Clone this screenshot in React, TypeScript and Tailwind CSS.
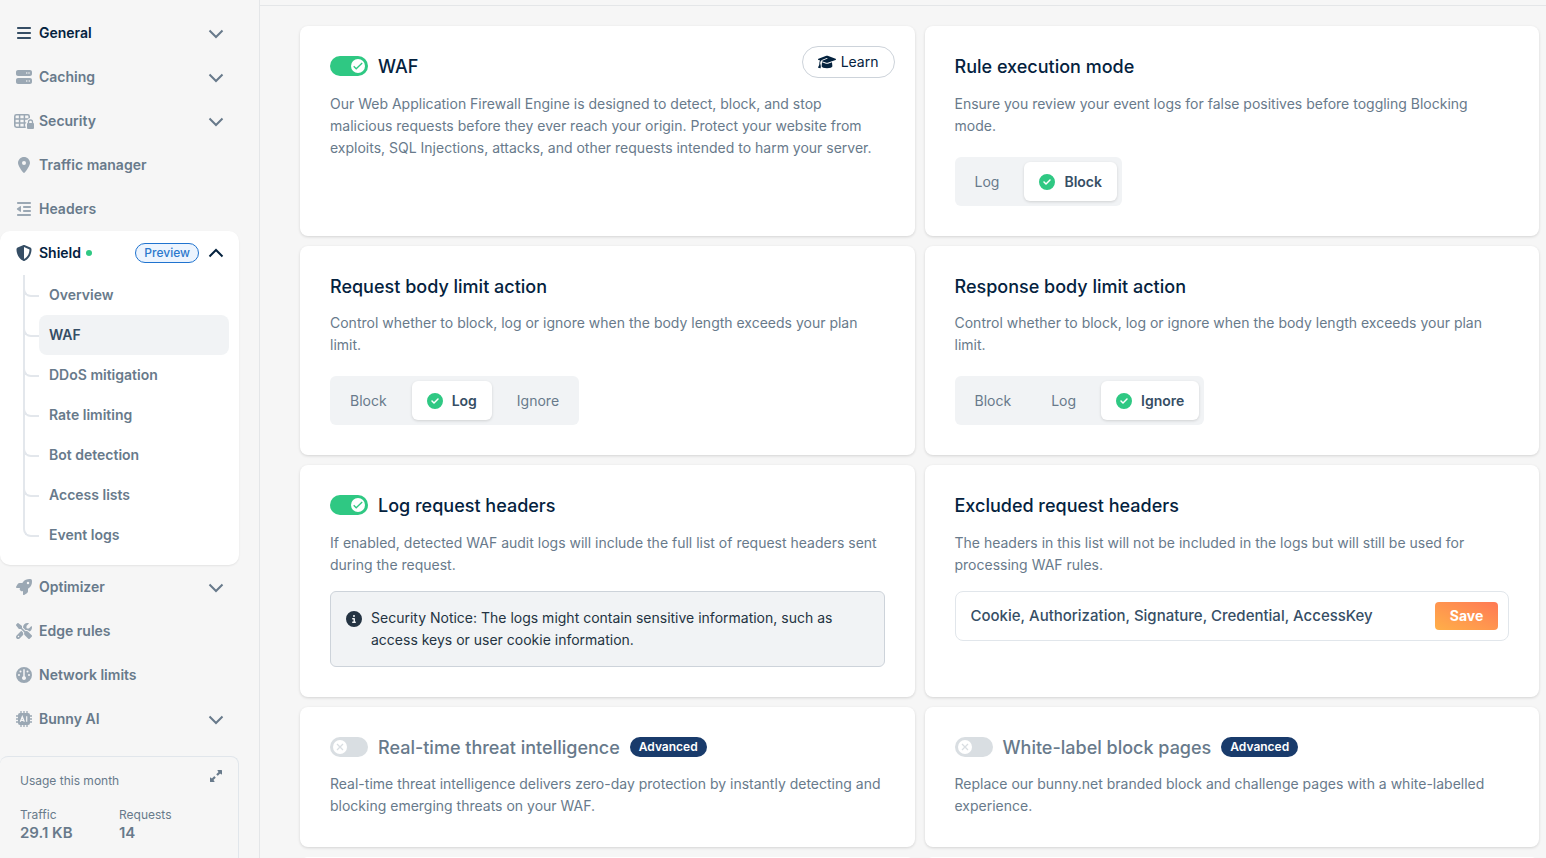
import { useId, useState } from 'react';
import type { ReactNode } from 'react';
import {
  FaBars,
  FaCircleCheck,
  FaCircleInfo,
  FaGauge,
  FaGraduationCap,
  FaLocationDot,
  FaOutdent,
  FaRocket,
  FaScrewdriverWrench,
  FaServer,
  FaShieldHalved,
  FaUpRightAndDownLeftFromCenter,
} from 'react-icons/fa6';

const SHIELD_PAGES = [
  'Overview',
  'WAF',
  'DDoS mitigation',
  'Rate limiting',
  'Bot detection',
  'Access lists',
  'Event logs',
];

function TableLockIcon() {
  return (
    <svg viewBox="0 0 20 16" className="h-4 w-5 shrink-0" fill="none" stroke="currentColor" aria-hidden="true">
      <rect x="0.8" y="1.8" width="14.4" height="12.4" rx="1.6" strokeWidth="1.6" />
      <path d="M5.6 1.500v13M10.400 1.500v13M1 5.900h14.400M1 10h14.400" strokeWidth="1.500" />
      <path
        d="M11.700 16v-6.200l1.100-.900c0-2.300 1.500-4 3.700-4s3.500 1.500 3.500 3.500V16Z"
        fill="#f6f6f6"
        stroke="none"
      />
      <path d="M14.500 11V9a2 2 0 0 1 4 0v2" strokeWidth="1.300" />
      <rect x="13" y="10" width="7" height="6" rx="1" fill="currentColor" stroke="none" />
    </svg>
  );
}

function ChipIcon() {
  return (
    <svg viewBox="0 0 16 16" className="size-4 shrink-0" aria-hidden="true">
      <path
        d="M5 0v16M8 0v16M11 0v16M0 5h16M0 8h16M0 11h16"
        stroke="currentColor"
        strokeWidth="1.3"
      />
      <rect x="2" y="2" width="12" height="12" rx="2" fill="currentColor" />
      <path
        d="m4.3 10.800 2-5.200 2 5.200M5 9.400h2.600M10.700 5.200v5.600"
        stroke="#f6f6f6"
        strokeWidth="1.2"
        fill="none"
      />
    </svg>
  );
}

function Chevron({ up = false }: { up?: boolean }) {
  return (
    <svg
      viewBox="0 0 16 10"
      className={up ? 'h-2.5 w-4 rotate-180' : 'h-2.5 w-4'}
      fill="none"
      stroke="currentColor"
      strokeWidth="2"
      aria-hidden="true"
    >
      <path d="M1.500 1.500 8 8l6.500-6.500" />
    </svg>
  );
}

type NavItemProps = { icon: ReactNode; label: string; expandable?: boolean; current?: boolean };

function NavItem({ icon, label, expandable, current }: NavItemProps) {
  const body = (
    <>
      <span
        className={
          current
            ? 'flex w-5 justify-center text-base text-[#364e65]'
            : 'flex w-5 justify-center text-base text-[#9ba8b4]'
        }
      >
        {icon}
      </span>
      <span className={current ? 'ml-[5px] text-[#04223e]' : 'ml-[5px]'}>{label}</span>
      {expandable && (
        <span className="mt-0.5 ml-auto">
          <Chevron />
        </span>
      )}
    </>
  );

  return (
    <li>
      {expandable ? (
        <button type="button" aria-expanded="false" className="flex h-11 w-full items-center pr-[15px] pl-3.5 text-left">
          {body}
        </button>
      ) : (
        <a href="#" className="flex h-11 items-center pr-[15px] pl-3.5">
          {body}
        </a>
      )}
    </li>
  );
}

function ShieldMenu() {
  return (
    <li className="rounded-[10px] bg-white pb-2.5 shadow-[0_1px_2px_rgba(0,0,0,0.08)]">
      <button type="button" aria-expanded="true" className="flex h-11 w-full items-center pr-[15px] pl-3.5 text-left text-[#04223e]">
        <span className="flex w-5 justify-center text-base text-[#364e65]">
          <FaShieldHalved />
        </span>
        <span className="ml-[5px]">Shield</span>
        <span className="ml-[5px] size-1.5 rounded-full bg-[#2fc883]" />
        <span className="ml-auto flex h-5 items-center rounded-full border border-[#1f73cf] bg-[#ecf4fe] px-2 text-xs font-medium text-[#2b78cc]">
          Preview
        </span>
        <span className="ml-[9px]">
          <Chevron up />
        </span>
      </button>
      <ul className="pr-2.5 pl-[23px]">
        {SHIELD_PAGES.map((page, i) => (
          <li key={page} className="flex h-10">
            <span
              className={
                i === SHIELD_PAGES.length - 1
                  ? 'w-4 border-l-2 border-transparent'
                  : 'w-4 border-l-2 border-[#e3e7ec]'
              }
            >
              <span className="-ml-0.5 block h-[22px] rounded-bl-lg border-b-2 border-l-2 border-[#e3e7ec]" />
            </span>
            <a
              href="#"
              className={
                page === 'WAF'
                  ? 'flex flex-1 items-center rounded-lg bg-[#f1f3f5] px-2.5 text-[#364e65]'
                  : 'flex flex-1 items-center px-2.5'
              }
            >
              {page}
            </a>
          </li>
        ))}
      </ul>
    </li>
  );
}

function Sidebar() {
  return (
    <aside className="flex w-[260px] shrink-0 flex-col border-r border-[#e4e6e8] pt-[11px] pr-5 text-[#687a8b]">
      <nav>
        <ul className="text-sm font-semibold">
          <NavItem icon={<FaBars />} label="General" expandable current />
          <NavItem icon={<FaServer />} label="Caching" expandable />
          <NavItem icon={<TableLockIcon />} label="Security" expandable />
          <NavItem icon={<FaLocationDot />} label="Traffic manager" />
          <NavItem icon={<FaOutdent />} label="Headers" />
          <ShieldMenu />
          <NavItem icon={<FaRocket />} label="Optimizer" expandable />
          <NavItem icon={<FaScrewdriverWrench />} label="Edge rules" />
          <NavItem icon={<FaGauge />} label="Network limits" />
          <NavItem icon={<ChipIcon />} label="Bunny AI" expandable />
        </ul>
      </nav>

      <section className="mt-[15px] flex-1 rounded-t-lg border-t border-r border-[#e1e6eb] px-5 pt-[13px] text-xs">
        <div className="flex items-start justify-between leading-[22px]">
          <h2>Usage this month</h2>
          <button type="button" aria-label="Expand usage" className="-mr-1">
            <FaUpRightAndDownLeftFromCenter />
          </button>
        </div>
        <dl className="mt-3.5 grid grid-cols-2 leading-[18px]">
          <div>
            <dt>Traffic</dt>
            <dd className="text-[15px] leading-[18px] font-semibold">29.1 KB</dd>
          </div>
          <div>
            <dt>Requests</dt>
            <dd className="text-[15px] leading-[18px] font-semibold">14</dd>
          </div>
        </dl>
      </section>
    </aside>
  );
}

function Toggle({ id, defaultChecked = false }: { id: string; defaultChecked?: boolean }) {
  const [on, setOn] = useState(defaultChecked);

  return (
    <span className="relative flex h-5 w-[38px] shrink-0">
      <input
        id={id}
        type="checkbox"
        role="switch"
        checked={on}
        onChange={(e) => setOn(e.target.checked)}
        className="h-5 w-[38px] appearance-none rounded-full bg-[#d9dee2] checked:bg-[#2fc883]"
      />
      <svg
        viewBox="0 0 14 14"
        className={
          on
            ? 'pointer-events-none absolute top-[3px] right-[3px] size-3.5 text-[#2fc883]'
            : 'pointer-events-none absolute top-[3px] left-[3px] size-3.5 text-[#d9dee2]'
        }
        fill="none"
        stroke="currentColor"
        strokeWidth="1.3"
        aria-hidden="true"
      >
        <circle cx="7" cy="7" r="7" fill="#fff" stroke="none" />
        {on ? <path d="m2.700 7.300 2.500 2.500 6-5.800" /> : <path d="m4 4 6 6M10 4l-6 6" />}
      </svg>
    </span>
  );
}

type CardProps = {
  title: string;
  text: string;
  toggle?: 'on' | 'off';
  tight?: boolean;
  badge?: string;
  action?: ReactNode;
  children?: ReactNode;
};

function Card({ title, text, toggle, tight, badge, action, children }: CardProps) {
  const id = useId();

  return (
    <section className="rounded-lg bg-white p-[30px] shadow-[0_1px_3px_rgba(0,0,0,0.14)]">
      <div className={tight ? 'mb-3.5 flex h-[22px] items-start' : 'mb-[15px] flex h-[22px] items-start'}>
        {toggle && <Toggle id={id} defaultChecked={toggle === 'on'} />}
        <h2
          className={
            toggle === 'off'
              ? 'ml-2.5 text-lg leading-[22px] font-medium text-[#687a8b]'
              : toggle
                ? 'ml-2.5 text-lg leading-[22px] font-medium text-[#04223e]'
                : 'text-lg leading-[22px] font-medium text-[#04223e]'
          }
        >
          {toggle ? <label htmlFor={id}>{title}</label> : title}
        </h2>
        {badge && (
          <span className="ml-2.5 flex h-5 items-center rounded-full bg-[#193b6b] px-[9px] text-xs font-semibold text-white">
            {badge}
          </span>
        )}
        {action}
      </div>
      <p className="text-sm leading-[22px] text-[#687a8b]">{text}</p>
      {children}
    </section>
  );
}

function Segmented({ label, options, initial }: { label: string; options: string[]; initial: string }) {
  const name = useId();
  const [value, setValue] = useState(initial);

  return (
    <fieldset className="mt-5 flex w-fit gap-2.5 rounded-md bg-[#f1f3f5] p-[5px] text-sm" aria-label={label}>
      {options.map((option) => (
        <label
          key={option}
          className={
            value === option
              ? 'relative flex h-[39px] items-center gap-[9px] rounded-md bg-white px-[15px] font-semibold text-[#364e65] shadow-[0_1px_3px_rgba(0,0,0,0.14)]'
              : 'relative flex h-[39px] items-center px-[15px] text-[#687a8b]'
          }
        >
          <input
            type="radio"
            name={name}
            value={option}
            checked={value === option}
            onChange={() => setValue(option)}
            className="sr-only"
          />
          {value === option && <FaCircleCheck className="size-4 text-[#2fc883]" />}
          {option}
        </label>
      ))}
    </fieldset>
  );
}

export default function App() {
  const [headers, setHeaders] = useState('Cookie, Authorization, Signature, Credential, AccessKey');

  return (
    <div className="flex h-screen overflow-hidden bg-[#f6f6f6] font-['Inter',sans-serif]">
      <Sidebar />
      <div className="flex-1">
        <header className="h-1.5 border-b border-[#e4e6e8]" />
        <main className="grid grid-cols-2 gap-2.5 pt-5 pr-[7px] pl-10">
          <Card
            title="WAF"
            toggle="on"
            text="Our Web Application Firewall Engine is designed to detect, block, and stop malicious requests before they ever reach your origin. Protect your website from exploits, SQL Injections, attacks, and other requests intended to harm your server."
            action={
              <button
                type="button"
                className="-mt-2.5 -mr-2.5 ml-auto flex h-8 shrink-0 items-center gap-[5px] rounded-full border border-[#cdd3da] bg-white px-[15px] text-sm text-[#04223e]"
              >
                <FaGraduationCap className="size-[18px]" />
                Learn
              </button>
            }
          />
          <Card
            title="Rule execution mode"
            text="Ensure you review your event logs for false positives before toggling Blocking mode."
          >
            <Segmented label="Rule execution mode" options={['Log', 'Block']} initial="Block" />
          </Card>

          <Card
            title="Request body limit action"
            tight
            text="Control whether to block, log or ignore when the body length exceeds your plan limit."
          >
            <Segmented label="Request body limit action" options={['Block', 'Log', 'Ignore']} initial="Log" />
          </Card>
          <Card
            title="Response body limit action"
            tight
            text="Control whether to block, log or ignore when the body length exceeds your plan limit."
          >
            <Segmented label="Response body limit action" options={['Block', 'Log', 'Ignore']} initial="Ignore" />
          </Card>

          <Card
            title="Log request headers"
            toggle="on"
            text="If enabled, detected WAF audit logs will include the full list of request headers sent during the request."
          >
            <div className="mt-[15px] flex gap-[9px] rounded-md border border-[#cdd3da] bg-[#f1f3f5] p-[15px] text-sm leading-[22px] text-[#243342]">
              <FaCircleInfo className="mt-1 size-4 shrink-0" />
              <p>
                Security Notice: The logs might contain sensitive information, such as access keys or user
                cookie information.
              </p>
            </div>
          </Card>
          <Card
            title="Excluded request headers"
            text="The headers in this list will not be included in the logs but will still be used for processing WAF rules."
          >
            <form
              onSubmit={(e) => e.preventDefault()}
              className="mt-[15px] flex h-[50px] items-center rounded-lg border border-[#e1e6eb] pr-2.5 pl-[15px]"
            >
              <input
                type="text"
                aria-label="Excluded request headers"
                value={headers}
                onChange={(e) => setHeaders(e.target.value)}
                className="min-w-0 flex-1 text-[15px] font-medium text-[#364e65] outline-none"
              />
              <button
                type="submit"
                className="h-7 w-[63px] rounded bg-linear-to-tr from-[#ffaf48] to-[#ff7854] text-sm font-bold text-white"
              >
                Save
              </button>
            </form>
          </Card>

          <Card
            title="Real-time threat intelligence"
            toggle="off"
            tight
            badge="Advanced"
            text="Real-time threat intelligence delivers zero-day protection by instantly detecting and blocking emerging threats on your WAF."
          />
          <Card
            title="White-label block pages"
            toggle="off"
            tight
            badge="Advanced"
            text="Replace our bunny.net branded block and challenge pages with a white-labelled experience."
          />
          <div className="h-10 rounded-lg bg-white" />
          <div className="h-10 rounded-lg bg-white" />
        </main>
      </div>
    </div>
  );
}
